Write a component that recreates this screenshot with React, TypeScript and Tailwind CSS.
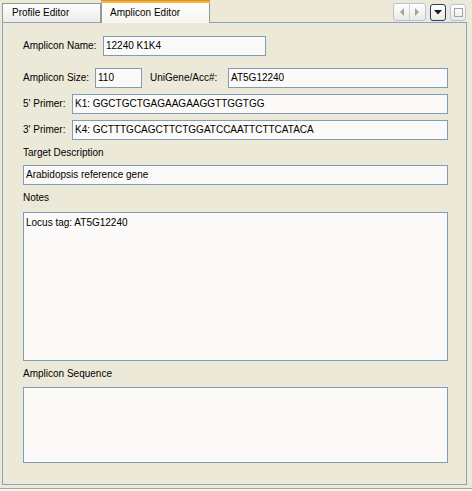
import React from 'react';

const Field: React.FC<{ value?: string; className?: string }> = ({ value, className }) => (
  <div className={`h-[20px] border border-[#7f9db9] bg-[#fbfaf8] pl-[2px] flex items-center whitespace-nowrap overflow-hidden ${className ?? ''}`}>
    {value}
  </div>
);

const App: React.FC = () => {
  return (
    <div
      className="w-[472px] h-[491px] bg-[#ece9d8] text-black text-[10px] leading-none overflow-hidden"
      style={{ fontFamily: '"Liberation Sans", Arial, sans-serif' }}
    >
      {/* tab strip */}
      <div className="relative h-[22px] flex items-end pl-[2px]">
        <div className="h-[19px] w-[99px] border border-b-0 border-[#919b9c] bg-gradient-to-b from-[#fefefe] to-[#ecebe6] pl-[9px] flex items-center">
          Profile Editor
        </div>
        <div className="relative z-10 h-[23px] -mb-[1px] w-[109px] border-x border-[#919b9c] bg-gradient-to-b from-[#fefefe] to-[#f7f6f0] flex flex-col">
          <div className="h-[3px] -mx-[1px] bg-[#f7b43c] border-t border-[#e68b2c]" />
          <div className="flex-1 flex items-center pl-[8px] pb-[1px]">Amplicon Editor</div>
        </div>
        <div className="flex-1" />
        <div className="self-start mt-[3px] mr-[6px] flex items-center">
          <div className="flex h-[18px] w-[33px] border border-[#b5c4d8] rounded-[3px] bg-gradient-to-b from-white to-[#eceae2]">
            <div className="flex-1 flex items-center justify-center border-r border-[#c7d2e0]">
              <svg width="5" height="8" viewBox="0 0 5 8"><path d="M5 0 L1 4 L5 8 Z" fill="#a3a3a3" /></svg>
            </div>
            <div className="flex-1 flex items-center justify-center">
              <svg width="5" height="8" viewBox="0 0 5 8"><path d="M0 0 L4 4 L0 8 Z" fill="#a3a3a3" /></svg>
            </div>
          </div>
          <div className="ml-[4px] h-[17px] w-[16px] border border-[#1c3f6e] rounded-[3px] bg-gradient-to-b from-white to-[#eceae2] flex items-center justify-center">
            <svg width="8" height="5" viewBox="0 0 8 5"><path d="M0 0 L8 0 L4 4.5 Z" fill="#1a1a1a" /></svg>
          </div>
          <div className="ml-[4px] h-[17px] w-[16px] border border-[#b5c4d8] rounded-[3px] bg-gradient-to-b from-white to-[#eceae2] flex items-center justify-center">
            <div className="w-[9px] h-[9px] border border-[#a3a3a3]" />
          </div>
        </div>
      </div>

      {/* panel */}
      <div className="ml-[2px] w-[465px] h-[463px] border border-[#8aa2bf] pl-[20px] pr-[18px] pt-[13px] flex flex-col">
        <div className="flex items-center h-[20px]">
          <span className="w-[80px]">Amplicon Name:</span>
          <Field value="12240 K1K4" className="w-[163px]" />
        </div>
        <div className="flex items-center h-[20px] mt-[12px]">
          <span className="w-[72px]">Amplicon Size:</span>
          <Field value="110" className="w-[47px]" />
          <span className="ml-[8px] w-[78px]">UniGene/Acc#:</span>
          <Field value="AT5G12240" className="flex-1" />
        </div>
        <div className="flex items-center h-[20px] mt-[6px]">
          <span className="w-[49px]">5' Primer:</span>
          <Field value="K1: GGCTGCTGAGAAGAAGGTTGGTGG" className="flex-1" />
        </div>
        <div className="flex items-center h-[20px] mt-[6px]">
          <span className="w-[49px]">3' Primer:</span>
          <Field value="K4: GCTTTGCAGCTTCTGGATCCAATTCTTCATACA" className="flex-1" />
        </div>

        <div className="mt-[6px] h-[14px] flex items-center">Target Description</div>
        <Field value="Arabidopsis reference gene" className="mt-[5px]" />

        <div className="mt-[6px] h-[14px] flex items-center">Notes</div>
        <div className="mt-[7px] h-[149px] border border-[#7f9db9] bg-[#fbfaf8] pl-[2px] pt-[5px]">
          Locus tag: AT5G12240
        </div>

        <div className="mt-[6px] h-[14px] flex items-center">Amplicon Sequence</div>
        <div className="mt-[6px] h-[76px] border border-[#7f9db9] bg-[#fbfaf8]" />
      </div>

      <div className="mt-[3px] h-[1px] bg-[#aca899]" />
      <div className="h-[2px] bg-[#f6f5ef]" />
    </div>
  );
};

export default App;
